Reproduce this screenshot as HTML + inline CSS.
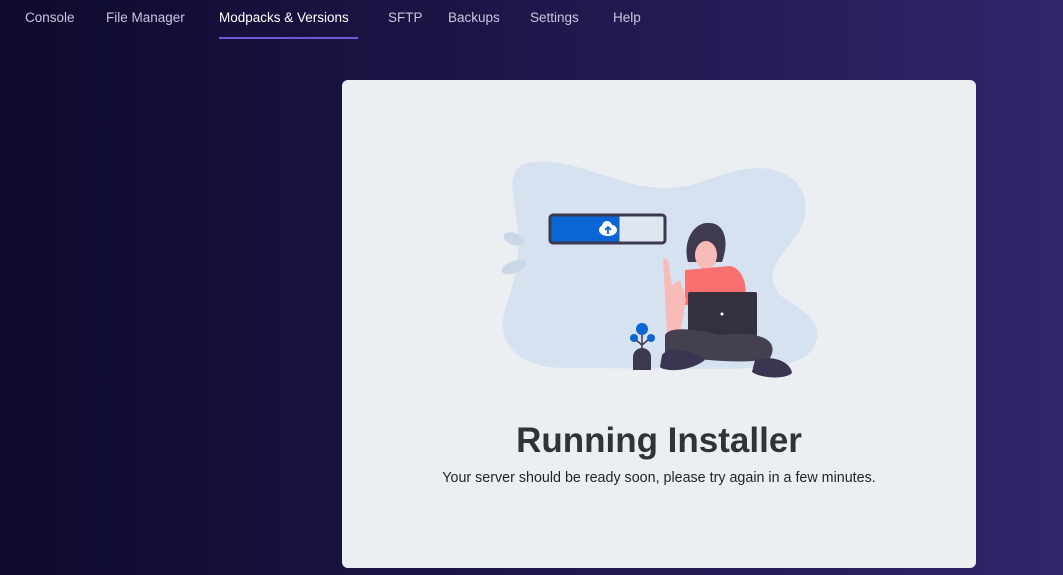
<!DOCTYPE html>
<html><head><meta charset="utf-8"><style>
html,body{margin:0;padding:0;width:1063px;height:575px;overflow:hidden}
body{background:linear-gradient(90deg,#0d0a2c 0%,#1c1648 45%,#30266a 100%);font-family:"Liberation Sans",sans-serif;position:relative}
.nav{position:absolute;top:0;left:0;height:40px}
.nav span{position:absolute;top:10px;font-size:13.5px;color:#c9c6dc;white-space:nowrap}
.nav .act{color:#fff}
.ul{position:absolute;left:219px;top:37px;width:139px;height:2px;background:#6f57d6}
.card{position:absolute;left:342px;top:80px;width:634px;height:488px;background:#eceff2;border-radius:6px}
h1{position:absolute;left:0;width:634px;top:341px;margin:0;text-align:center;font-size:35px;font-weight:bold;color:#2f3438}
p{position:absolute;left:0;width:634px;top:390px;margin:0;text-align:center;font-size:14.3px;color:#1f2327}
svg{position:absolute;left:0;top:0}
</style></head><body>
<div class="nav">
<span style="left:25px">Console</span>
<span style="left:106px">File Manager</span>
<span class="act" style="left:219px">Modpacks &amp; Versions</span>
<span style="left:388px">SFTP</span>
<span style="left:448px">Backups</span>
<span style="left:530px">Settings</span>
<span style="left:613px">Help</span>
</div>
<div class="ul"></div>
<div class="card">
<h1>Running Installer</h1>
<p>Your server should be ready soon, please try again in a few minutes.</p>
</div>
<svg width="1063" height="575" viewBox="0 0 1063 575">
<path d="M522 165 C560 150 610 185 660 188 C700 190 720 168 760 168 C800 170 815 200 800 230 C785 255 760 270 780 295 C800 310 825 320 815 345 C805 365 780 368 720 369 L560 368 C520 366 495 345 505 310 C515 280 520 260 518 230 C515 200 505 175 522 165Z" fill="#d6e2ef"/>
<ellipse cx="514" cy="239" rx="11" ry="6" fill="#c9d7e6" transform="rotate(20 514 239)"/>
<ellipse cx="514" cy="267" rx="13" ry="6" fill="#c9d7e6" transform="rotate(-20 514 267)"/>
<rect x="550" y="215" width="115" height="28" rx="3" fill="#dfe6ef" stroke="#3b3850" stroke-width="3"/>
<rect x="551.5" y="216.5" width="68" height="25" fill="#0a66d4"/>
<ellipse cx="608" cy="230" rx="9" ry="6" fill="#fff"/><circle cx="607" cy="226" r="5" fill="#fff"/>
<path d="M608 234v-6m-3 2l3-3 3 3" stroke="#0a66d4" stroke-width="1.8" fill="none"/>
<path d="M688 262 C682 240 695 222 708 223 C724 222 730 240 722 262 Z" fill="#3f3a50"/>
<ellipse cx="706" cy="255" rx="11" ry="14" fill="#f8bcb8"/>
<path d="M685 270 L730 266 C742 268 748 285 745 300 L685 305 Z" fill="#f87070"/>
<path d="M663 258 L668 260 L672 285 L680 280 L686 300 L678 345 L667 335 Z" fill="#f8bcb8"/>
<rect x="688" y="292" width="69" height="44" rx="2" fill="#35303f"/>
<circle cx="722" cy="314" r="1.5" fill="#fff"/>
<path d="M665 335 C670 325 700 330 720 335 C760 330 780 340 770 358 C750 365 700 360 665 355 Z" fill="#45404f"/>
<path d="M662 355 C670 345 690 350 705 360 C690 372 665 372 660 367 Z" fill="#3a3550"/>
<path d="M755 360 C770 355 790 360 792 373 C785 380 760 378 752 372 Z" fill="#3a3550"/>
<circle cx="642" cy="329" r="6" fill="#0a66d4"/><circle cx="634" cy="338" r="4" fill="#0a66d4"/><circle cx="651" cy="338" r="4" fill="#0a66d4"/>
<path d="M642 335v15M636 340l6 5 6-5" stroke="#3b3850" stroke-width="1.5" fill="none"/>
<path d="M633 370 V357 a9 9 0 0 1 18 0 V370Z" fill="#3b3850"/>
</svg>
</body></html>
